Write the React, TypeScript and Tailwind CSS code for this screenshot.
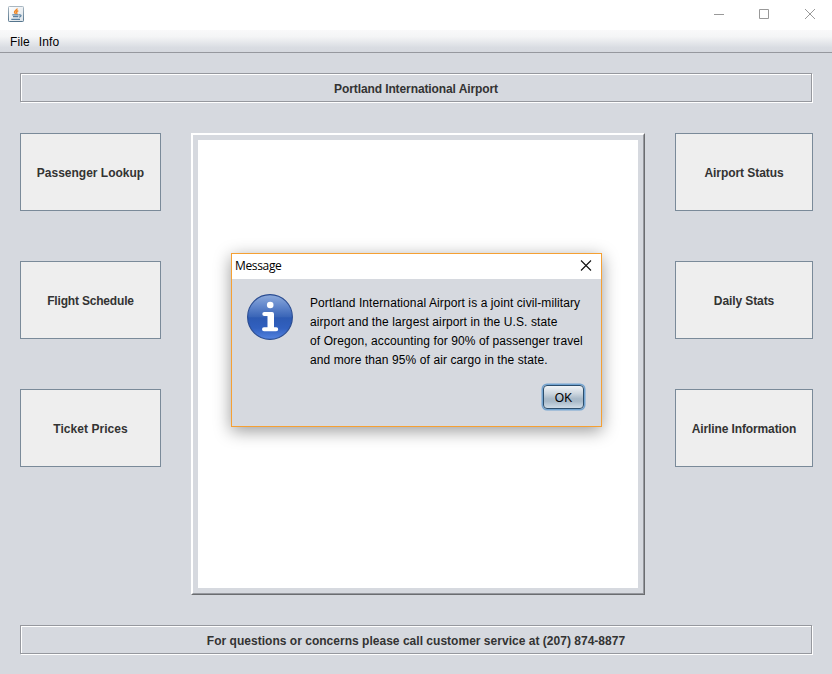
import React from "react";

function Banner({ children }: { children: React.ReactNode }) {
  return (
    <div className="mx-5 flex h-[29px] w-[792px] items-center justify-center border border-[#96989e] pt-[2px] shadow-[inset_1px_1px_0_#ffffff,1px_1px_0_#ffffff]">
      {children}
    </div>
  );
}

function ActionButton({ label, className = "" }: { label: string; className?: string }) {
  return (
    <button className="flex h-[78px] w-full items-center justify-center border border-[#7a8a99] bg-[#eeeeee] pt-px font-bold">
      <span className={`whitespace-nowrap ${className}`}>{label}</span>
    </button>
  );
}

function JavaIcon() {
  return (
    <svg width="16" height="16" viewBox="0 0 16 16">
      <defs>
        <linearGradient id="java-frame" x1="0" y1="0" x2="0" y2="1">
          <stop offset="0" stopColor="#a9b7c2" />
          <stop offset="1" stopColor="#55758d" />
        </linearGradient>
        <linearGradient id="java-face" x1="0" y1="0" x2="1" y2="1">
          <stop offset="0" stopColor="#ffffff" />
          <stop offset="1" stopColor="#dce3e9" />
        </linearGradient>
      </defs>
      <rect x="0.5" y="0.5" width="15" height="15" rx="0.8" fill="url(#java-face)" stroke="url(#java-frame)" />
      <path d="M9 2.500C9.600 4 6 4.800 6.600 6.400c.2.600.7.900 1 1.400M10.300 4.800c-1.600.5-2.200 1.300-1.500 2.100.2.400 0 .7-.3 1" fill="none" stroke="#f0892a" strokeWidth="1.500" />
      <path d="M4.300 8.900h6.400M5 10.700h5.300M11 8.900c2.900-.4 2.500 2 .1 2.300M3.300 13.300h8.700" fill="none" stroke="#5b80a0" strokeWidth="1.200" />
    </svg>
  );
}

function InfoIcon() {
  return (
    <svg width="46" height="46" viewBox="0 0 46 46" className="shrink-0">
      <defs>
        <linearGradient id="info-fill" x1="0" y1="0" x2="0" y2="1">
          <stop offset="0" stopColor="#8eabdc" />
          <stop offset="0.250" stopColor="#6388cc" />
          <stop offset="0.490" stopColor="#3b66b8" />
          <stop offset="0.520" stopColor="#2d5ab3" />
          <stop offset="0.750" stopColor="#3160bf" />
          <stop offset="1" stopColor="#5584e0" />
        </linearGradient>
      </defs>
      <circle cx="23" cy="23" r="22.400" fill="url(#info-fill)" stroke="#2a4c91" strokeWidth="1.100" />
      <circle cx="23.200" cy="11" r="3.300" fill="#fff" />
      <path d="M17.300 18h7.800q1.900 0 1.900 1.900V33.200h2.200a2 2 0 0 1 0 4H17a2 2 0 0 1 0-4h3.500V22h-3.200a2 2 0 0 1 0-4Z" fill="#fff" />
    </svg>
  );
}

function MessageDialog() {
  return (
    <div className="absolute left-[231px] top-[253px] flex h-[174px] w-[371px] flex-col border border-[#f5a033] bg-[#d6d9df] text-black shadow-[0_4px_16px_rgba(0,0,0,0.4)]">
      <div className="flex h-[25px] shrink-0 items-center justify-between bg-white pb-px pl-[3px] pr-[9px]">
        <span className="font-['Open_Sans','Noto_Sans',sans-serif] text-[12px] tracking-[-0.35px]">Message</span>
        <svg width="12" height="12" viewBox="0 0 12 12">
          <path d="m1 .5 10 10M11 .5 1 10.500" stroke="#111" strokeWidth="1.100" />
        </svg>
      </div>
      <div className="flex pl-[15px] pt-[15px]">
        <InfoIcon />
        <div className="ml-[17px] flex flex-col whitespace-nowrap text-[12px] leading-[19px] tracking-[0.095px]">
          <span>Portland International Airport is a joint civil-military</span>
          <span>airport and the largest airport in the U.S. state</span>
          <span>of Oregon, accounting for 90% of passenger travel</span>
          <span>and more than 95% of air cargo in the state.</span>
        </div>
      </div>
      <button className="ml-[311px] mt-[15px] flex h-[24px] w-[41px] shrink-0 items-center justify-center rounded-[4px] border border-[#2c4e6d] bg-[linear-gradient(#f1f4f7_0%,#cbd5de_35%,#a8b9c8_58%,#a9bac9_70%,#d0dce7_100%)] pt-px text-[12px] shadow-[0_0_0_1.500px_#73a4d1]">
        OK
      </button>
    </div>
  );
}

export default function App() {
  return (
    <div className="relative flex h-[674px] w-[832px] flex-col overflow-hidden bg-[#d6d9df] font-['Liberation_Sans',Arial,sans-serif] text-[12px] text-[#333333]">
      <header className="flex h-[30px] shrink-0 items-start justify-between bg-white pl-2 pr-[16px] pt-[6px]">
        <JavaIcon />
        <svg width="102" height="16" viewBox="0 0 102 16" fill="none" stroke="#999">
          <path d="M0 8.500h10M45.500 3.500h9v9h-9zM91 3l10 10M101 3 91 13" />
        </svg>
      </header>
      <nav className="flex h-[23px] shrink-0 items-center gap-[9px] border-b border-[#96989e] bg-[linear-gradient(#f9f9fa_0%,#f4f5f6_30%,#d9dce2_80%,#d6d9df_100%)] pl-[10px] pt-[2px] text-black">
        <span className="tracking-[0.1px]">File</span>
        <span className="tracking-[0.1px]">Info</span>
      </nav>
      <div className="mt-5 font-bold">
        <Banner><span className="whitespace-nowrap tracking-[-0.1px]">Portland International Airport</span></Banner>
      </div>
      <main className="mt-[31px] flex h-[462px] pl-5">
        <div className="flex w-[141px] flex-col gap-[50px]">
          <ActionButton label="Passenger Lookup" />
          <ActionButton label="Flight Schedule" className="tracking-[-0.18px]" />
          <ActionButton label="Ticket Prices" className="tracking-[0.05px]" />
        </div>
        <div className="ml-[30px] w-[454px] border border-b-[#6b6d70] border-l-white border-r-[#6b6d70] border-t-white">
          <div className="h-full border border-b-[#96989e] border-l-white border-r-[#96989e] border-t-white p-[5px]">
            <div className="h-full bg-white" />
          </div>
        </div>
        <div className="ml-[30px] flex w-[138px] flex-col gap-[50px]">
          <ActionButton label="Airport Status" className="tracking-[-0.06px]" />
          <ActionButton label="Daily Stats" className="tracking-[-0.1px]" />
          <ActionButton label="Airline Information" className="tracking-[-0.12px]" />
        </div>
      </main>
      <footer className="mt-[30px] font-bold">
        <Banner><span className="whitespace-nowrap tracking-[0.02px]">For questions or concerns please call customer service at (207) 874-8877</span></Banner>
      </footer>
      <MessageDialog />
    </div>
  );
}
